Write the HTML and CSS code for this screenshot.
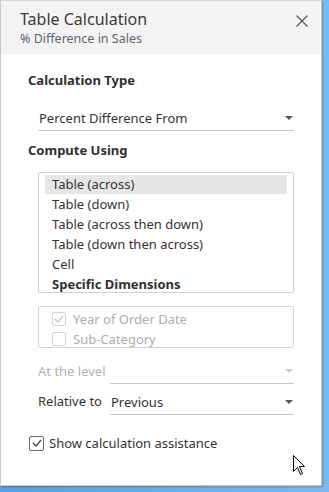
FILE: index.html
```html
<!DOCTYPE html>
<html>
<head>
<meta charset="utf-8">
<link rel="stylesheet" href="styles.css">
</head>
<body>
<div class="panel">
  <div class="header">
    <div class="titles">
      <div class="title">Table Calculation</div>
      <div class="subtitle">% Difference in Sales</div>
    </div>
    <svg class="close" width="12" height="12" viewBox="0 0 12 12"><path d="M0.5 0.5L11.5 11.5M11.5 0.5L0.5 11.5" stroke="#555" stroke-width="1.2" fill="none"/></svg>
  </div>
  <div class="body">
    <div class="label">Calculation Type</div>
    <div class="select type">
      <span>Percent Difference From</span>
      <span class="arrow"></span>
    </div>
    <div class="label compute">Compute Using</div>
    <div class="list">
      <div class="item sel">Table (across)</div>
      <div class="item">Table (down)</div>
      <div class="item">Table (across then down)</div>
      <div class="item">Table (down then across)</div>
      <div class="item">Cell</div>
      <div class="item bold">Specific Dimensions</div>
    </div>
    <div class="dims">
      <div class="dim"><span class="cb dis checked"><svg width="10" height="8" viewBox="0 0 10 8"><path d="M1 4L4 7L9 1" stroke="#c4c4c4" stroke-width="1.2" fill="none"/></svg></span>Year of Order Date</div>
      <div class="dim"><span class="cb dis"></span>Sub-Category</div>
    </div>
    <div class="row dis-row">
      <span class="rlabel">At the level</span>
      <div class="select grow"><span></span><span class="arrow light"></span></div>
    </div>
    <div class="row rel-row">
      <span class="rlabel">Relative to</span>
      <div class="select grow"><span>Previous</span><span class="arrow"></span></div>
    </div>
    <div class="assist"><span class="cb on"><svg width="10" height="8" viewBox="0 0 10 8"><path d="M1 4L4 7L9 1" stroke="#444" stroke-width="1.3" fill="none"/></svg></span>Show calculation assistance</div>
  </div>
  <svg class="cursor" width="13" height="21" viewBox="0 0 13 21"><path d="M0.5 0.5L0.5 16.5L4.5 12.5L7.5 19.5L9.5 18.5L6.5 11.5L11.5 11.5Z" fill="#fff" stroke="#000" stroke-width="1"/></svg>
</div>
</body>
</html>
```
FILE: styles.css
```css
html, body {
  margin: 0;
  padding: 0;
}
body {
  width: 329px;
  height: 492px;
  background: linear-gradient(90deg, #5b9fdc, #7db9ee);
  font-family: "Noto Sans", "Open Sans", sans-serif;
  color: #333;
  overflow: hidden;
}
.panel {
  position: relative;
  box-sizing: border-box;
  width: 322px;
  height: 486px;
  background: #fff;
  border: 1px solid #c9c9c9;
  border-top-color: #d6d6d6;
  box-shadow: 1px 1px 2px rgba(0,0,0,0.25);
}
.header {
  background: #f3f3f3;
  height: 53px;
  display: flex;
  justify-content: space-between;
  align-items: flex-start;
  padding: 0 13px 0 19px;
}
.title {
  font-size: 16px;
  color: #3a3a3a;
  margin-top: 8px;
  line-height: 21px;
}
.subtitle {
  font-size: 12.5px;
  color: #5f6570;
  line-height: 17px;
}
.close {
  margin-top: 14px;
}
.body {
  padding: 17px 27px 0 27px;
}
.label {
  font-size: 13px;
  font-weight: bold;
  color: #2f2f2f;
  line-height: 18px;
}
.select {
  display: flex;
  justify-content: space-between;
  align-items: center;
  border-bottom: 1px solid #c8c8c8;
  font-size: 13px;
  color: #333;
  height: 23px;
}
.type {
  margin: 16px 0 0 10px;
  padding-left: 1px;
  height: 25px;
}
.arrow {
  width: 0;
  height: 0;
  border-left: 4px solid transparent;
  border-right: 4px solid transparent;
  border-top: 4px solid #555;
  margin-right: 1px;
}
.arrow.light {
  border-top-color: #ccc;
}
.compute {
  margin-top: 10px;
}
.list {
  margin: 13px 0 0 10px;
  border: 1px solid #cfcfcf;
  border-radius: 2px;
  height: 121px;
  padding: 2px 6px 0 6px;
  box-sizing: border-box;
}
.item {
  font-size: 13px;
  line-height: 20px;
  padding-left: 7px;
  color: #333;
}
.item.sel {
  background: #e6e6e6;
  line-height: 19px;
}
.item.bold {
  font-weight: bold;
  color: #2f2f2f;
}
.dims {
  margin: 13px 0 0 10px;
  border: 1px solid #d4d4d4;
  border-radius: 2px;
  height: 42px;
  box-sizing: border-box;
  padding: 2px 0 0 13px;
}
.dim {
  display: flex;
  align-items: center;
  font-size: 13px;
  color: #adadad;
  height: 20px;
}
.cb {
  box-sizing: border-box;
  width: 14px;
  height: 14px;
  border: 1px solid #d2d2d2;
  border-radius: 2px;
  margin-right: 7px;
  display: flex;
  align-items: center;
  justify-content: center;
}
.row {
  display: flex;
  align-items: flex-end;
  margin-left: 10px;
  font-size: 13px;
}
.rlabel {
  width: 72px;
  line-height: 18px;
  padding-bottom: 4px;
}
.dis-row {
  margin-top: 10px;
  color: #b3b3b3;
}
.dis-row .select {
  height: 25px;
}
.grow {
  flex: 1;
}
.rel-row {
  margin-top: 5px;
}
.rel-row .select {
  height: 25px;
}
.rel-row .rlabel {
  padding-bottom: 5px;
}
.row .select span:first-child {
  padding-left: 1px;
}
.assist {
  display: flex;
  align-items: center;
  margin: 19px 0 0 1px;
  font-size: 13px;
  color: #333;
}
.cb.on {
  border-color: #666;
  width: 15px;
  height: 15px;
  margin-right: 5px;
}
.cursor {
  position: absolute;
  left: 292px;
  top: 454px;
}
```
